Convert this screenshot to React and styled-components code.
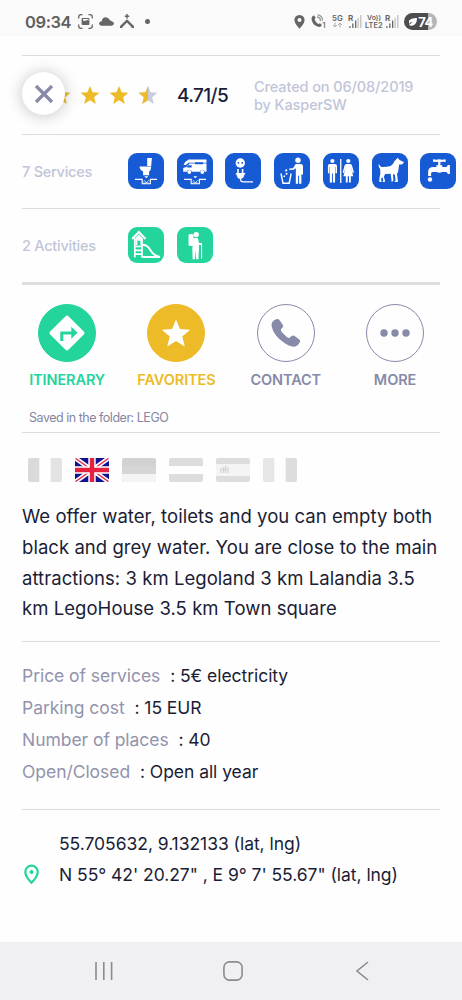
import { useState } from "react";
import styled, { createGlobalStyle } from "styled-components";

const STAR = "M12 1.2l3.1 7.6 8.2.6-6.3 5.3 2 8-7-4.4-7 4.4 2-8L.7 9.4l8.2-.6z";

const languages = ["fr", "en", "de", "nl", "es", "it"];

const description =
	"We offer water, toilets and you can empty both\nblack and grey water. You are close to the main\nattractions: 3 km Legoland 3 km Lalandia 3.5\nkm LegoHouse 3.5 km Town square";

const infos = [
	{ label: "Price of services", value: "5€ electricity" },
	{ label: "Parking cost", value: "15 EUR" },
	{ label: "Number of places", value: "40" },
	{ label: "Open/Closed", value: "Open all year" },
];

// waste pit shared by the two dump icons
function Pit() {
	return (
		<g stroke="#fff" fill="none" strokeWidth="1.1">
			<path d="M7 26.4h7.2v4.4h8.2v-4.4H29" />
			<path d="M15.5 28.6q1-1.8 2 0t2 0 2-.8M15.5 30l5-.3" strokeWidth=".7" />
			<path d="M16.3 23.2h4l-2 2z" fill="#fff" stroke="none" />
		</g>
	);
}

function BlackWater() {
	return (
		<svg viewBox="0 0 36 36">
			<path d="M19.2 5h4.7l-.7 8h-4zM11.5 13.4h11.8q-.2 3.8-2.2 5v3.8h-6v-3.6Q11.9 17 11.5 13.4z" />
			<Pit />
		</svg>
	);
}

function GreyWater() {
	return (
		<svg viewBox="0 0 36 36">
			<path d="M11.5 6.5h18v3.2h-18l-2.6 2.3H6.5q1.6-3.9 5-5.5z" />
			<path d="M12.5 10.5h17v8.2h-1.8a2.4 2.4 0 0 0-4.7 0H14.8a2.5 2.5 0 0 0-4.9 0H6.2v-3.7l3-1z" />
			<path d="M11 12.2h3.7v2.3H9.6zM18 9.3h8v2h-8z" fill="#165bd3" />
			<circle cx="12.3" cy="19" r="1.9" />
			<circle cx="25.3" cy="19" r="1.9" />
			<Pit />
		</svg>
	);
}

function Electricity() {
	return (
		<svg viewBox="0 0 36 36">
			<circle cx="15.3" cy="10" r="4.7" />
			<path d="M12.7 9h1.4v1.8h-1.4zM16.5 9h1.4v1.8h-1.4z" fill="#165bd3" />
			<path d="M12.2 16h1.6v4h3v-4h1.6v4h1.8v1.5h-.8q-.3 3.5-2.5 4.2h-2.8q-2.2-.7-2.5-4.2h-.8V20h1.4z" />
			<path d="M15.5 25v1.5q0 2.3 3 2.3h9.5" stroke="#fff" strokeWidth="1.2" fill="none" />
		</svg>
	);
}

function Trash() {
	return (
		<svg viewBox="0 0 36 36">
			<circle cx="24" cy="7.3" r="2.7" />
			<path d="M21.7 11h5q2.3 0 2.3 2.3v8.2h-1.6v9.3h-2.3v-8h-1v8h-2.3V15.2l-2.2 1.6-4.3.3v-1.5l3.7-.4z" />
			<path d="M7 20.5l2 9.7h6.2l1.9-9.7" stroke="#fff" strokeWidth="1.4" fill="none" />
			<path d="M10.7 17.2l2-1.3.8 1.6-1.6 1.2zM11.5 20.3l1.5-.8.7 1.7-1.6.8zM9.5 22.5h1.5V24H9.5z" />
		</svg>
	);
}

function Toilets() {
	return (
		<svg viewBox="0 0 36 36">
			<circle cx="9.4" cy="8" r="2.1" />
			<path d="M7 11h5q2 0 2 2v7.3h-1.5V14h-.4v15.5H9.9v-9H9v9H6.8V14h-.4v6.3H4.9V13q0-2 2.1-2z" />
			<path d="M17.1 6h1.3v24h-1.3z" />
			<circle cx="25.3" cy="8" r="2.1" />
			<path d="M23.3 11h4q1.3 0 1.7 1.5l2 7-1.3.5-1.9-6 2.4 9.2h-2.4v6.3H26v-6.3h-1.3v6.3h-1.9v-6.3h-2.4l2.4-9.2-1.9 6-1.3-.5 2-7q.4-1.5 1.7-1.5z" />
		</svg>
	);
}

function Dog() {
	return (
		<svg viewBox="0 0 36 36">
			<path d="M25.7 4.8l1.8 2.3 4.3 1.8q-.3 2.4-2.4 2.6l-2.3.1-.8 6.3q-.2 1.7-1.3 2.8l1 8-1.5.4h-1.8v-1l1-.5-1-6-1.8-.3.6 6.3-.8 1h-1.5l.3-1.1-.8-6.7-5.6.2-1.2 2.7 1.2 4.5-.7.7h-1.8v-.9l.7-.4-.8-3.7-1.5 2.2.6 2.2-.7.8H7.2l.1-1.2.1-2.4 1-5.2-.3-4.2q-1.500-1.800-1.700-4.500l.8-.2q.8 2.200 2.700 2.700 5 .1 8.700-1 2.200-1.300 4-5.200z" />
		</svg>
	);
}

// tap with a drop under the spout
function Water() {
	return (
		<svg viewBox="0 0 36 36">
			<path d="M13 6.3q3 .7 6.3 0 3.3.7 6.3 0v2.7q-2.6-.6-5.2 0v3.2h1.8v1.8h4.2l1.5-2h2v9h-2l-1.3-2h-4.2q-3 1.5-6 0h-3.9q-1.4 0-1.4 1.6v2.3H8.1v-3.6q0-5.3 5.3-5.3h3v-1.8h1.8V9q-2.6-.6-5.2 0z" />
			<circle cx="10" cy="26.5" r="2.2" />
		</svg>
	);
}

function Playground() {
	return (
		<svg viewBox="0 0 36 36" fill="none" stroke="#fff" strokeWidth="1.7">
			<path d="M4.2 12l6.6-7 6.7 7" strokeWidth="2.1" />
			<path d="M7.5 10.8l3.3-3.3 3.3 3.3v7.5H7.5z" fill="#fff" stroke="none" />
			<path d="M9.3 13.7v4.5h3.1v-4.5z" fill="#23d59c" stroke="none" />
			<path d="M6.8 11v19.500M14 11v19.500M6.8 19.500H14M6.8 23.300H14M6.8 27.100H14" />
			<path d="M14 17.8q5.2 0 8 4.7 3.5 6.400 10 7.400H14.500" strokeWidth="2" />
		</svg>
	);
}

function Hiking() {
	return (
		<svg viewBox="0 0 36 36">
			<circle cx="19.2" cy="7.6" r="2.7" />
			<rect x="11.5" y="7" width="5" height="12" rx="1.5" />
			<path d="M16.5 11h4.2l1.3 4.8 3 .7v1.4l-3-.1v4l-.6 10.5h-2.2l-.5-9.5-.7 9.5h-2.4l-.3-11z" />
			<path d="M24.6 16v15.5" stroke="#fff" strokeWidth="1" />
		</svg>
	);
}

const services = [BlackWater, GreyWater, Electricity, Trash, Toilets, Dog, Water];
const activities = [Playground, Hiking];

function Flag({ code }) {
	if (code === "en") {
		return (
			<svg viewBox="0 0 34 24">
				<path d="M0 0h34v24H0z" fill="#10128f" />
				<path d="M0 0l34 24M34 0L0 24" stroke="#fff" strokeWidth="4.6" />
				<path d="M0 0l14 10M34 0L20 10M0 24l14-10M34 24l-14-10" stroke="#e6203f" strokeWidth="1.3" />
				<path d="M17 0v24M0 12h34" stroke="#fff" strokeWidth="7.4" />
				<path d="M17 0v24M0 12h34" stroke="#e6203f" strokeWidth="4.4" />
			</svg>
		);
	}
	if (code === "fr" || code === "it") {
		return (
			<svg viewBox="0 0 34 24">
				<path d="M0 0h34v24H0z" fill="#fefefe" />
				<path d="M0 0h11.3v24H0z" fill={code === "fr" ? "#dadada" : "#e6e6e6"} />
				<path d="M22.7 0H34v24H22.7z" fill={code === "fr" ? "#e3e3e3" : "#dddddd"} />
			</svg>
		);
	}
	if (code === "de") {
		return (
			<svg viewBox="0 0 34 24">
				<path d="M0 0h34v24H0z" fill="#d2d2d2" />
				<path d="M0 8h34v16H0z" fill="#d6d6d6" />
				<path d="M0 16h34v8H0z" fill="#f4f4f4" />
			</svg>
		);
	}
	return (
		<svg viewBox="0 0 34 24">
			<path d="M0 0h34v24H0z" fill="#dddddd" />
			{code === "nl" ? (
				<path d="M0 8h34v8H0z" fill="#fefefe" />
			) : (
				<>
					<path d="M0 6h34v12H0z" fill="#f4f4f4" />
					<path d="M5 10v5M7.5 9v6M9.5 7.5V15M12 9v6M6 11.5h5" stroke="#d2d2d2" strokeWidth="1.2" fill="none" />
				</>
			)}
		</svg>
	);
}

function StatusLeft() {
	return (
		<StatusGroup>
			<Clock>09:34</Clock>
			<svg width="15" height="15" viewBox="0 0 15 15" fill="none" stroke="#666" strokeWidth="1.3">
				<path d="M.7 4.5V3Q.7.7 3 .7h1.5M10.5.7H12q2.3 0 2.3 2.3v1.5M14.3 10.5V12q0 2.3-2.3 2.3h-1.5M4.5 14.3H3Q.7 14.3.7 12v-1.5" />
				<path d="M4.6 4h5.8q1 0 1 1v5q0 1-1 1H4.6q-1 0-1-1V5q0-1 1-1zM5 6.7h3l1.5-.9 1 .8V5H5z" fill="#666" stroke="none" fillRule="evenodd" />
			</svg>
			<svg width="15" height="9" viewBox="0 0 15 9" fill="#666">
				<path d="M3 8.7Q0 8.5.1 6.3.4 4.3 2.7 4.2 3.3.4 6.7.2q2.8 0 3.9 2.5.7.9 1.7 1.2 2.7.5 2.7 2.7-.2 2-2.5 2.1z" />
			</svg>
			<svg width="14" height="15" viewBox="0 0 14 15" fill="none" stroke="#666">
				<path d="M1.2 14v-1.4L7 7l5.8 5.6V14" strokeWidth="2.4" />
				<path d="M7 0v4.4M4.8 2.2h4.4" strokeWidth="1.5" />
			</svg>
			<Dot />
		</StatusGroup>
	);
}

function Signal() {
	return (
		<svg width="14" height="15" viewBox="0 0 14 15">
			<text x="0" y="7" fontSize="8" fontWeight="700" fill="#666">
				R
			</text>
			<path d="M1.3 12h1.2v2H1.3zM4.2 9.5h1.3V14H4.2zM7 6.5h1.3V14H7z" fill="#666" />
			<path d="M9.5 4h1.2v10H9.5zM12.2 1h1.2v13h-1.2z" fill="#bbb" />
		</svg>
	);
}

function StatusRight() {
	return (
		<StatusIcons>
			<svg width="11" height="14" viewBox="0 0 11 14">
				<path d="M5.5 0Q10.5.3 10.6 5q0 3.5-5.1 8.7Q.4 8.5.4 5 .5.3 5.5 0zm0 3a2 2 0 1 0 0 4 2 2 0 0 0 0-4z" fill="#666" fillRule="evenodd" />
			</svg>
			<svg width="16" height="15" viewBox="0 0 16 15">
				<path d="M2.7 1.2l1.9 2.4-1 1.9q1 3 3.6 4.5l1.9-.8 1.9 2q-1.5 2.3-4 1.6Q.8 10.7.5 4.5q.4-2.6 2.2-3.3z" fill="#666" />
				<path d="M6 3q3.5.3 3.5 4M6.5.8q5 .5 5.1 6" stroke="#999" strokeWidth="1.3" fill="none" />
				<text x="11.5" y="14" fontSize="7" fontWeight="600" fill="#666">
					1
				</text>
			</svg>
			<svg width="11" height="15" viewBox="0 0 11 15">
				<text x="0" y="6.8" fontSize="7.8" fontWeight="600" fill="#666" textLength="10.7" lengthAdjust="spacingAndGlyphs">
					5G
				</text>
				<path d="M3 8.5V13M1 11l2 2 2-2M8 13.5V9M6 11l2-2 2 2" stroke="#aaa" fill="none" />
			</svg>
			<Signal />
			<Volte width="18" height="15" viewBox="0 0 18 15" fill="#666" fontWeight="600">
				<text x="2" y="6.2" fontSize="6.5" textLength="14" lengthAdjust="spacingAndGlyphs">
					Vo))
				</text>
				<text x="0" y="13.8" fontSize="7" textLength="17.5" lengthAdjust="spacingAndGlyphs">
					LTE2
				</text>
			</Volte>
			<Signal />
			<Battery>
				<svg width="10" height="10" viewBox="0 0 10 10">
					<path d="M1 3.5Q3.5.5 9 1q0 6-4 7.5-3 .5-4-.5l4-3.3Q2 5 1 7z" fill="#fff" />
				</svg>
				74
			</Battery>
		</StatusIcons>
	);
}

export default function App() {
	const [open, setOpen] = useState(true);
	const [lang, setLang] = useState("en");

	return (
		<Screen>
			<GlobalStyle />
			<StatusBar>
				<StatusLeft />
				<StatusRight />
			</StatusBar>

			<Content>
				<RatingRow>
					{open ? (
						<CloseBtn onClick={() => setOpen(false)}>
							<svg width="20" height="20" viewBox="0 0 20 20">
								<path d="M2 2l16 16M18 2L2 18" stroke="#878aa9" strokeWidth="3.2" />
							</svg>
						</CloseBtn>
					) : null}
					<Stars>
						{[1, 2, 3, 4].map((n) => (
							<svg key={n} viewBox="0 0 24 24">
								<path d={STAR} fill="#edbb27" />
							</svg>
						))}
						<svg viewBox="0 0 24 24">
							<path d={STAR} fill="#c9cce0" />
							<path d="M12 1.2L8.9 8.8.7 9.4 7 14.7l-2 8 7-4.4z" fill="#edbb27" />
						</svg>
					</Stars>
					<Score>4.71/5</Score>
					<Created>
						Created on 06/08/2019
						<br />
						by KasperSW
					</Created>
				</RatingRow>

				<IconRow>
					<RowLabel>7 Services</RowLabel>
					{services.map((Icon, i) => (
						<Tile key={i} $color="#165bd3">
							<Icon />
						</Tile>
					))}
				</IconRow>
				<IconRow $last>
					<RowLabel>2 Activities</RowLabel>
					{activities.map((Icon, i) => (
						<Tile key={i} $color="#23d59c">
							<Icon />
						</Tile>
					))}
				</IconRow>

				<Actions>
					<Action $color="#23d59c">
						<Circle $fill="#23d59c">
							<svg width="36" height="36" viewBox="0 0 36 36">
								<path d="M16.6 1.2q1.4-1.4 2.8 0l15.4 15.4q1.4 1.4 0 2.8L19.4 34.8q-1.4 1.4-2.8 0L1.2 19.4q-1.4-1.4 0-2.8z" fill="#fff" />
								<path d="M11.3 26v-9.5h11v-4.7l6.2 6-6.2 5.9v-4.2h-8V26z" fill="#23d59c" />
							</svg>
						</Circle>
						ITINERARY
					</Action>
					<Action $color="#edbb27">
						<Circle $fill="#edbb27">
							<svg width="30" height="30" viewBox="0 0 24 24">
								<path d={STAR} fill="#fff" />
							</svg>
						</Circle>
						FAVORITES
					</Action>
					<Action $color="#878aa9">
						<Circle>
							<svg width="30" height="30" viewBox="0 0 30 30">
								<path d="M1 4.6Q3 1.3 6.2.9q1.4-.1 2.2 1l3.5 5q.8 1.5-.4 2.7l-1.7 2q-.2 1.1 1.3 2.9l4.7 4.5q1.8 1.3 2.8.8l2-1.8q1.3-1.1 2.7-.2l5 3.6q1.4 1.2.7 2.7-1.5 3-4.6 4.5-5.3 1-12.2-4.5Q2.5 17.2.7 8.5q-.3-2.2.3-3.9z" fill="#878aa9" />
							</svg>
						</Circle>
						CONTACT
					</Action>
					<Action $color="#878aa9">
						<Circle>
							<svg width="30" height="8" viewBox="0 0 30 8" fill="#878aa9">
								<circle cx="4" cy="4" r="3.7" />
								<circle cx="15" cy="4" r="3.7" />
								<circle cx="26" cy="4" r="3.7" />
							</svg>
						</Circle>
						MORE
					</Action>
				</Actions>
				<Folder>Saved in the folder: LEGO</Folder>

				<Flags>
					{languages.map((code) => (
						<FlagBtn key={code} onClick={() => setLang(code)} aria-pressed={lang === code}>
							<Flag code={code} />
						</FlagBtn>
					))}
				</Flags>
				<Description>{description}</Description>

				<Infos>
					{infos.map((info) => (
						<InfoLine key={info.label}>
							<span>{info.label}</span> : {info.value}
						</InfoLine>
					))}
				</Infos>

				<Location>
					<svg width="17" height="21" viewBox="0 0 17 21">
						<path d="M8.5 1.7a6.2 6.2 0 0 1 6.2 6.2q0 4.5-6.2 10.8Q2.3 12.4 2.3 7.9a6.2 6.2 0 0 1 6.2-6.2z" fill="none" stroke="#23d59c" strokeWidth="2.2" />
						<circle cx="8.5" cy="8" r="2" fill="#23d59c" />
					</svg>
					<div>
						<Coord>55.705632, 9.132133 (lat, lng)</Coord>
						<Coord>N 55° 42' 20.27" , E 9° 7' 55.67" (lat, lng)</Coord>
					</div>
				</Location>
			</Content>

			<NavBar>
				<svg width="20" height="20" viewBox="0 0 20 20">
					<path d="M2 1v18M9.8 1v18M17.6 1v18" />
				</svg>
				<svg width="20" height="20" viewBox="0 0 20 20">
					<rect x=".9" y=".9" width="18.2" height="18.2" rx="5.6" />
				</svg>
				<svg width="20" height="20" viewBox="0 0 20 20">
					<path d="M16 1L5 10l11 9" />
				</svg>
			</NavBar>
		</Screen>
	);
}

const GlobalStyle = createGlobalStyle`
	* {
		box-sizing: border-box;
	}
	body {
		margin: 0;
		background: #fefefe;
		font-family: Inter, "Liberation Sans", sans-serif;
	}
	svg {
		display: block;
		flex: none;
	}
	button {
		border: 0;
		padding: 0;
		background: none;
		cursor: pointer;
	}
`;

const Screen = styled.div`
	width: 462px;
	height: 1000px;
	display: flex;
	flex-direction: column;
	overflow: hidden;
	color: #1a1d35;
	white-space: nowrap;
`;

const StatusBar = styled.header`
	height: 36px;
	flex: none;
	display: flex;
	justify-content: space-between;
	padding: 6px 25px 0;
	background: #fafafa;
`;

const StatusGroup = styled.div`
	height: 31px;
	display: flex;
	align-items: center;
	gap: 6px;
`;

const Clock = styled.span`
	width: 47px;
	font-size: 16.5px;
	font-weight: 600;
	letter-spacing: -0.4px;
	color: #5f5f5f;
`;

const Dot = styled.i`
	width: 5px;
	height: 5px;
	margin-left: 5px;
	border-radius: 50%;
	background: #666;
`;

const StatusIcons = styled(StatusGroup)`
	gap: 5.4px;
`;

const Volte = styled.svg`
	margin: 0 -4px 0 -2.5px;
`;

const Battery = styled.div`
	width: 33px;
	height: 17px;
	display: flex;
	align-items: center;
	justify-content: center;
	border-radius: 9px;
	background: linear-gradient(90deg, #4d4d4d 74%, #b5b5b5 74%);
	color: #fff;
	font-size: 13px;
	font-weight: 700;
	letter-spacing: -0.5px;
`;

const Content = styled.main`
	flex: 1;
	padding: 19px 22px 0;
`;

const RatingRow = styled.section`
	position: relative;
	height: 79px;
	display: flex;
	align-items: center;
	border-top: 1px solid #dcdcdc;
`;

const CloseBtn = styled.button`
	position: absolute;
	left: 0;
	top: 16px;
	z-index: 1;
	width: 43px;
	height: 43px;
	display: grid;
	place-items: center;
	border-radius: 50%;
	background: #fff;
	box-shadow: 0 1px 16px rgba(0, 0, 0, 0.24);
`;

const Stars = styled.div`
	display: flex;
	gap: 9px;
	width: 136px;
	svg {
		width: 20px;
		height: 20px;
	}
`;

const Score = styled.span`
	width: 77px;
	margin-left: 19px;
	font-size: 19px;
	font-weight: 500;
	letter-spacing: -0.6px;
`;

const Created = styled.span`
	padding-top: 1px;
	font-size: 14.5px;
	font-weight: 500;
	line-height: 18px;
	letter-spacing: -0.1px;
	color: #c1c5d8;
`;

const IconRow = styled.section`
	height: ${(props) => (props.$last ? "77px" : "74px")};
	display: flex;
	align-items: center;
	gap: 12.75px;
	padding-bottom: 2px;
	border-top: 1px solid #dcdcdc;
	border-bottom: ${(props) => (props.$last ? "3px solid #dedede" : "0")};
`;

const RowLabel = styled.span`
	width: 93px;
	flex: none;
	padding-top: 2px;
	font-size: 14.5px;
	font-weight: 500;
	letter-spacing: -0.25px;
	color: #c1c5d8;
`;

const Tile = styled.div`
	width: 36px;
	height: 36px;
	flex: none;
	border-radius: 9px;
	background: ${(props) => props.$color};
	fill: #fff;
`;

const Actions = styled.section`
	display: grid;
	grid-template-columns: repeat(4, 109.3px);
	margin: 0 -9.5px;
	padding-top: 19px;
`;

const Action = styled.div`
	display: flex;
	flex-direction: column;
	align-items: center;
	gap: 9px;
	font-size: 14.5px;
	font-weight: 600;
	line-height: 18px;
	letter-spacing: -0.1px;
	color: ${(props) => props.$color};
`;

const Circle = styled.div`
	width: 58px;
	height: 58px;
	display: grid;
	place-items: center;
	border: 1px solid ${(props) => props.$fill || "#878aa9"};
	border-radius: 50%;
	background: ${(props) => props.$fill || "transparent"};
`;

const Folder = styled.div`
	height: 44px;
	padding: 20px 7px 0;
	font-size: 12.5px;
	line-height: 18px;
	letter-spacing: -0.48px;
	color: #85869f;
	border-bottom: 1px solid #dcdcdc;
`;

const Flags = styled.div`
	display: flex;
	gap: 13px;
	padding: 25px 6px 0;
`;

const FlagBtn = styled.button`
	width: 34px;
	height: 24px;
	overflow: hidden;
	border-radius: 2px;
`;

const Description = styled.p`
	margin: 19px 0 0;
	height: 141px;
	font-size: 18.5px;
	line-height: 30.8px;
	letter-spacing: 0.05px;
	white-space: pre;
	border-bottom: 1px solid #dcdcdc;
`;

const Infos = styled.section`
	height: 168px;
	padding-top: 18px;
	border-bottom: 1px solid #dcdcdc;
`;

const InfoLine = styled.div`
	font-size: 17.5px;
	line-height: 32.1px;
	letter-spacing: -0.05px;
	span {
		margin-right: 5px;
		color: #9293ac;
	}
`;

const Location = styled.section`
	display: flex;
	align-items: flex-end;
	gap: 19px;
	padding-top: 18px;
	svg {
		margin: 0 0 5px 1px;
	}
`;

const Coord = styled.div`
	font-size: 17.5px;
	line-height: 31px;
	letter-spacing: -0.04px;
`;

const NavBar = styled.nav`
	height: 58px;
	flex: none;
	display: flex;
	align-items: center;
	justify-content: space-between;
	padding: 0 90px 0 94px;
	background: #f0f0f2;
	fill: none;
	stroke: #8b8b8d;
	stroke-width: 1.6;
`;
